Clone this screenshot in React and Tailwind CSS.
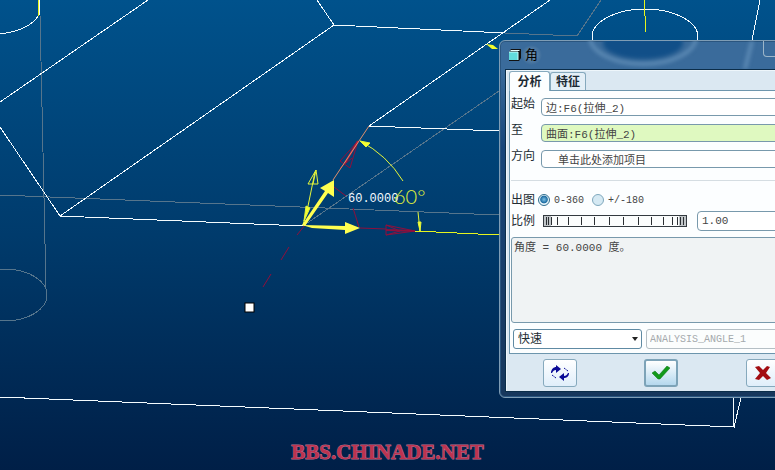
import { useState } from 'react';

const MONO = "font-['Liberation_Mono','Noto_Sans_CJK_SC',monospace]";

const field =
  'min-w-0 rounded-[4px] border border-[#7899ac] px-1 text-[11px] text-[#444] outline-none ' + MONO;

function Viewport() {
  return (
    <svg
      className="absolute top-0 left-0 w-[775px] h-[470px]"
      viewBox="0 0 775 470"
      fill="none"
      aria-hidden="true"
    >
      {/* hidden edges */}
      <g stroke="#56758c" shapeRendering="crispEdges">
        <path d="M40 15 L46 288" />
        <path d="M0 195 L499 215" />
        <path d="M303 226 L499 91" />
        <path d="M505 33 L577 36 L601 0" />
        <ellipse cx="5" cy="295" rx="42" ry="26" />
      </g>

      {/* visible edges */}
      <g stroke="#f4fcff" shapeRendering="crispEdges">
        <path d="M0 102 L148 0" />
        <path d="M0 127 L60 216 L334 25 L317 0" />
        <path d="M334 25 L505 33" />
        <path d="M60 216 L303 226" />
        <path d="M550 0 L369 126 L499 131" />
        <path d="M0 34 C16 32 32 26 39 15 V0" />
        <ellipse cx="645" cy="37" rx="53" ry="28" />
        <path d="M760 0 L752 40" />
        <path d="M0 397 L734 427 L733 398" />
        <path d="M734 427 L741 398" />
      </g>

      {/* axes and leaders */}
      <g stroke="#e6f41e" shapeRendering="crispEdges">
        <path d="M38 0 V16" />
        <path d="M644 0 L646 32" />
        <path d="M415 231 L499 235" />
      </g>
      <path d="M486 44 L493 45 L498 49 L492 49 Z" fill="#f2fb2c" />

      {/* reference vectors */}
      <g stroke="#8f0f3c">
        <path d="M305 225 L297 235" />
        <path d="M289 247 L281 260" />
        <path d="M271 274 L263 287" />
        <path d="M334 187 L346 196 M353 208 L359 227" />
        <path d="M360 228 L386 229" />
        <path d="M386 225 L415 231 L386 235 Z M386 225 L400 231 L386 235" />
        <path d="M386 230 L415 231" strokeWidth="2" />
        <path d="M340 161 L350 168 L358 141 Z M340 168 L352 158" />
      </g>
      <path d="M345 163 L358 141" stroke="#b01a3c" strokeWidth="2" />
      <path d="M333 180 L369 126" stroke="#e0906c" />

      {/* angle dimension */}
      <g stroke="#e4f53a">
        <path d="M360 141 Q387 155 403 181" />
        <path d="M418 212 L420 231" />
        <path d="M360 141 L370 143 L366 147 Z" fill="#f5ff30" />
        <path d="M418 222 L421 222 L420 231 Z" fill="#f5ff30" />
        <path d="M303 225 L308 206 L315 172" />
        <path d="M316 170 L308 184 H318 Z M313 184 L316 170" />
        <path d="M304 221 L306 206 L310 208 Z" fill="#f5ff30" />
      </g>

      {/* direction arrows */}
      <g fill="#ffff50">
        <path d="M302 225 L305 226 L328 193 L334 197 L334 180 L320 188 L325 191 Z" />
        <path d="M302 225 L345 226 V222 L360 228 L345 234 V230 L312 228 Z" />
      </g>

      <text
        x="348"
        y="202"
        fill="#f4fbff"
        className="text-[12px] font-['Liberation_Mono',monospace]"
      >
        60.0000
      </text>
      <text x="394" y="204" fill="#e4f53a" className="text-[20px] font-light font-['Lato',sans-serif]">
        60°
      </text>

      <rect x="245" y="303" width="9" height="9" fill="#fff" stroke="#000" />
    </svg>
  );
}

function ThumbWheel() {
  const ticks = [3, 5, 8, 14, 25, 38, 51, 66, 80, 95, 108, 120, 129, 134, 137, 140];
  return (
    <div className="relative w-36 h-3 shrink-0">
      <svg viewBox="0 0 144 12" className="block w-full h-full" shapeRendering="crispEdges" aria-hidden="true">
        <rect width="144" height="12" fill="#fbfdfd" />
        <rect width="8" height="12" fill="#c0c5c8" />
        <rect x="136" width="8" height="12" fill="#c0c5c8" />
        {ticks.map((x) => (
          <rect key={x} x={x} y="2" width="1" height="8" fill="#2b2f33" />
        ))}
        <rect x="0" y="0" width="144" height="1" fill="#333a40" />
        <rect x="0" y="11" width="144" height="1" fill="#333a40" />
        <rect x="0" y="0" width="1" height="12" fill="#333a40" />
        <rect x="143" y="0" width="1" height="12" fill="#333a40" />
      </svg>
      <input id="scale" type="range" className="absolute inset-0 w-full h-full opacity-0" />
    </div>
  );
}

function Reference({ id, label, value, active, indent }) {
  return (
    <div className="flex items-start">
      <label htmlFor={id} className="w-[30px] shrink-0 text-xs leading-3">
        {label}
      </label>
      <input
        id={id}
        defaultValue={value}
        className={`${field} flex-1 h-[18px] ${active ? 'bg-[#dff9c0]' : 'bg-white'} ${indent ? 'pl-4 text-xs' : ''}`}
      />
    </div>
  );
}

function RangeOption({ value, range, setRange }) {
  return (
    <label className={`flex items-center gap-1 text-[10px] text-[#444] ${MONO}`}>
      <input
        type="radio"
        name="range"
        checked={range === value}
        onChange={() => setRange(value)}
        className="appearance-none size-3 rounded-full border border-[#7fa8bd] bg-[#d5e9f3] checked:border-[#34708f] checked:bg-[radial-gradient(circle_at_50%_45%,#7cc0e4_0,#1f6ea3_45%,#e8f5fb_58%)]"
      />
      {value}
    </label>
  );
}

function ActionButton({ label, primary, children }) {
  return (
    <button
      aria-label={label}
      className={`flex items-center justify-center w-[34px] h-7 rounded-[3px] ${
        primary
          ? 'border-2 border-[#7da3b8] bg-linear-to-b from-white to-[#b5d8ee]'
          : 'border border-[#86a9bd] bg-linear-to-b from-white to-[#e0eefa]'
      }`}
    >
      {children}
    </button>
  );
}

function TitleBar() {
  return (
    <header className="relative flex items-center h-7 pl-1 overflow-hidden">
      {/* glass reflection of the model behind the frame */}
      <svg className="absolute left-20 top-0 w-52 h-7" viewBox="0 0 208 28" fill="none" aria-hidden="true">
        <g className="blur-[2px]">
          <ellipse cx="58" cy="2" rx="40" ry="16" fill="#114f88" />
          <ellipse cx="58" cy="-4" rx="53" ry="27" stroke="#7ba6cb" strokeWidth="2" />
          <path d="M167 0 L160 28" stroke="#7ba6cb" strokeWidth="2" />
        </g>
      </svg>
      <svg width="12" height="12" viewBox="0 0 12 12" aria-hidden="true">
        <path d="M0 3 L2 0 H12 V9 L10 12 H0 Z" fill="#111" />
        <path d="M1 2 L2 1 H11 L10 2 Z" fill="#e8ffff" />
        <rect x="0" y="3" width="9" height="8" fill="#62dcdc" />
        <path d="M0 3 H9 V11" stroke="#c8ffff" fill="none" />
      </svg>
      <h1 className="px-1 text-[13px] text-black bg-[radial-gradient(closest-side,#7795ae,transparent)]">
        角
      </h1>
      <button
        aria-label="关闭"
        className="absolute right-1 top-0 w-12 h-4 rounded-b-[4px] border border-t-0 border-[#9db6c9] text-white"
      ></button>
    </header>
  );
}

function AngleDialog() {
  const [tab, setTab] = useState('分析');
  const [range, setRange] = useState('0-360');

  return (
    <section
      aria-label="角"
      className="absolute left-[499px] top-10 w-[322px] rounded-md border border-[#7f9db5] bg-linear-to-b from-[#3a6b9b] from-8% via-[#17467a] via-30% to-[#17375c] px-[5px] pb-[5px] shadow-[inset_0_0_0_1px_#2a557f]"
    >
      <TitleBar />

      <div className="border border-[#0b2d49] bg-[#dbe8f2] pl-[3px] pt-px shadow-[inset_1px_1px_0_#eef6fb]">
        <div role="tablist" className="flex items-end h-5 border-b border-[#6c95ad]">
          {['分析', '特征'].map((name) => (
            <button
              key={name}
              role="tab"
              aria-selected={tab === name}
              onClick={() => setTab(name)}
              className={`rounded-t-[3px] border border-b-0 border-[#86a9bd] text-xs leading-[18px] font-bold text-[#1c2a33] ${
                tab === name ? 'w-[41px] h-5 -mb-px bg-[#fcfeff]' : 'w-9 h-[18px] bg-[#e4eff7]'
              }`}
            >
              {name}
            </button>
          ))}
        </div>

        <div className="border-l border-b border-[#6c95ad] bg-[#fcfeff] pl-px pt-[7px] pb-1 text-[#222c33]">
          <div className="flex flex-col gap-2">
            <Reference id="from" label="起始" value="边:F6(拉伸_2)" />
            <Reference id="to" label="至" value="曲面:F6(拉伸_2)" active />
            <Reference id="direction" label="方向" value="单击此处添加项目" indent />
          </div>

          <hr className="mt-3 border-[#d5dde2]" />

          <fieldset className="flex items-center gap-[6px] mt-[13px] h-3">
            <legend className="float-left w-6 text-xs leading-3">出图</legend>
            <div className="flex gap-2 -ml-[3px]">
              <RangeOption value="0-360" range={range} setRange={setRange} />
              <RangeOption value="+/-180" range={range} setRange={setRange} />
            </div>
          </fieldset>

          <div className="flex items-center mt-[5px] h-5">
            <label htmlFor="scale" className="w-8 shrink-0 text-xs leading-3">
              比例
            </label>
            <ThumbWheel />
            <input aria-label="比例值" defaultValue="1.00" className={`${field} flex-1 h-5 ml-[10px] bg-white`} />
          </div>

          <textarea
            aria-label="结果"
            readOnly
            value="角度 = 60.0000 度。"
            className={`block w-full h-[86px] mt-[6px] resize-none rounded-[3px] border border-[#7899ac] bg-[#f0f3f4] px-[2px] py-[2px] text-[11px] leading-4 text-[#444] outline-none ${MONO}`}
          />

          <div className="flex gap-1 mt-[6px] pl-[2px]">
            <div className="relative w-[129px] h-5 shrink-0">
              <select
                aria-label="类型"
                className="block appearance-none w-full h-5 rounded-[3px] border border-[#5f8aa3] bg-white px-1 text-xs leading-4 outline-none"
              >
                <option>快速</option>
              </select>
              <svg
                className="absolute right-1 top-2 pointer-events-none"
                width="6"
                height="4"
                viewBox="0 0 6 4"
                aria-hidden="true"
              >
                <path d="M0 0 H6 L3 4 Z" fill="#222" />
              </svg>
            </div>
            <input
              aria-label="名称"
              disabled
              defaultValue="ANALYSIS_ANGLE_1"
              className={`flex-1 min-w-0 h-5 rounded-[3px] border border-[#b5bfc5] bg-[#fbfdfd] px-[3px] text-[10px] text-[#a4a9ac] ${MONO}`}
            />
          </div>
        </div>

        <div className="flex justify-around pt-[5px] pb-1">
          <ActionButton label="重复">
            <svg width="18" height="16" viewBox="0 0 18 16" fill="#0a0a96" aria-hidden="true">
              <path d="M0 8 C0 4 3 2 5 2 V0 L10 4 L5 8 V5 C3 5 2 6 1 8 Z" />
              <path d="M18 8 C18 12 15 13 13 13 V16 L8 12 L13 8 V11 C15 11 16 10 17 8 Z" />
              <path d="M1 10 L5 13 M13 3 L17 6" stroke="#0a0a96" strokeDasharray="2 1" />
            </svg>
          </ActionButton>
          <ActionButton label="确定" primary>
            <svg width="18" height="14" viewBox="0 0 18 14" aria-hidden="true">
              <path d="M0 7 L3 5 L7 9 L15 0 L18 2 L8 13 H6 Z" fill="#119a1b" stroke="#08700f" strokeWidth="0.5" />
            </svg>
          </ActionButton>
          <ActionButton label="取消">
            <svg width="16" height="14" viewBox="0 0 16 14" aria-hidden="true">
              <path
                d="M0 1 L4 0 L8 4 L12 0 L15 1 L11 7 L16 12 L12 14 L8 10 L4 14 L0 13 L5 7 Z"
                fill="#a30d12"
              />
            </svg>
          </ActionButton>
        </div>
      </div>
    </section>
  );
}

export default function App() {
  return (
    <main className="relative flex flex-col justify-end min-h-screen overflow-hidden bg-linear-to-b from-[#00528c] via-[#003b6c] to-[#001f47] font-['Liberation_Sans','Noto_Sans_CJK_SC',sans-serif]">
      <Viewport />
      <AngleDialog />
      <p className="relative pb-1 text-center text-[21px] leading-7 font-bold text-[#bd3350] [-webkit-text-stroke:1px_#b76f8c] [paint-order:stroke_fill] font-['Liberation_Serif',serif]">
        BBS.CHINADE.NET
      </p>
    </main>
  );
}
